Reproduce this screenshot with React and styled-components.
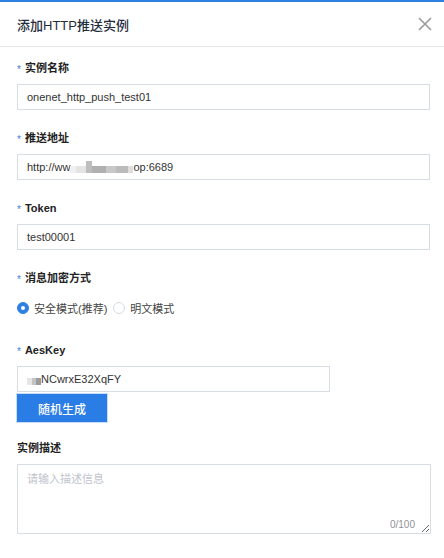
import React from 'react';
import styled, { createGlobalStyle } from 'styled-components';

const GlobalStyle = createGlobalStyle`
  html, body {
    margin: 0;
    padding: 0;
    background: #fff;
  }
  body {
    font-family: "Liberation Sans", Arial, "Noto Sans CJK SC", sans-serif;
    color: #333;
  }
`;

const App = () => {
  return (
    <>
      <GlobalStyle />
      <Dialog>
        <Header>
          <Title>添加HTTP推送实例</Title>
          <CloseButton aria-label="关闭">
            <svg width="14" height="14" viewBox="0 0 14 14">
              <path d="M1 1 L13 13 M13 1 L1 13" stroke="#9a9a9a" strokeWidth="1.6" fill="none" />
            </svg>
          </CloseButton>
        </Header>
        <Body>
          <Field>
            <Label required>实例名称</Label>
            <Input>onenet_http_push_test01</Input>
          </Field>
          <Field>
            <Label required>推送地址</Label>
            <Input>
              http://ww
              <Blur>
                <BlurBlock w={6} shade="#f0f0f0" />
                <BlurBlock w={10} shade="#e4e4e4" />
                <BlurBlock w={6} shade="#bdbdbd" tall />
                <BlurBlock w={14} shade="#b0b0b0" />
                <BlurBlock w={10} shade="#c8c8c8" />
                <BlurBlock w={12} shade="#bbbbbb" />
                <BlurBlock w={5} shade="#dedede" />
              </Blur>
              op:6689
            </Input>
          </Field>
          <Field>
            <Label required>Token</Label>
            <Input>test00001</Input>
          </Field>
          <Field>
            <Label required>消息加密方式</Label>
            <RadioRow>
              <RadioOption>
                <RadioDot checked />
                安全模式(推荐)
              </RadioOption>
              <RadioOption>
                <RadioDot />
                明文模式
              </RadioOption>
            </RadioRow>
          </Field>
          <Field tight>
            <Label required>AesKey</Label>
            <Input narrow>
              <Blur>
                <BlurBlock w={5} shade="#e6e6e6" />
                <BlurBlock w={4} shade="#c4c4c4" />
                <BlurBlock w={5} shade="#9c9c9c" />
              </Blur>
              NCwrxE32XqFY
            </Input>
            <PrimaryButton>随机生成</PrimaryButton>
          </Field>
          <Field>
            <Label>实例描述</Label>
            <TextAreaWrap>
              <TextArea placeholder="请输入描述信息" />
              <Counter>0/100</Counter>
            </TextAreaWrap>
          </Field>
        </Body>
      </Dialog>
    </>
  );
};

export default App;

const Dialog = styled.div`
  width: 444px;
  height: 558px;
  box-sizing: border-box;
  border-top: 2px solid #2f80e4;
  background: #fff;
`;

const Header = styled.div`
  height: 44px;
  display: flex;
  align-items: center;
  justify-content: space-between;
  padding: 0 12px 0 17px;
  border-bottom: 1px solid #e6e6e6;
`;

const Title = styled.div`
  font-size: 13px;
  font-weight: 500;
  color: #1f2d3d;
`;

const CloseButton = styled.button`
  border: none;
  background: none;
  padding: 0;
  width: 14px;
  height: 14px;
  display: flex;
  cursor: pointer;
`;

const Body = styled.div`
  padding: 13px 14px 0 17px;
`;

const Field = styled.div`
  display: flex;
  flex-direction: column;
  align-items: flex-start;
  margin-bottom: ${(p) => (p.tight ? '18px' : '20px')};
`;

const Label = styled.div`
  height: 16px;
  line-height: 16px;
  font-size: 11px;
  font-weight: 600;
  color: #222;
  margin-bottom: 8px;
  display: flex;
  align-items: center;

  &::before {
    content: ${(p) => (p.required ? '"*"' : 'none')};
    color: #3b82d6;
    font-size: 10px;
    font-weight: 400;
    line-height: 1;
    margin-top: 4px;
    margin-right: 4px;
  }
`;

const Input = styled.div`
  box-sizing: border-box;
  width: ${(p) => (p.narrow ? '313px' : '413px')};
  height: 26px;
  border: 1px solid #d8dde3;
  padding: 0 9px;
  display: flex;
  align-items: center;
  font-size: 11px;
  color: #333;
  white-space: nowrap;
`;

const Blur = styled.span`
  display: inline-flex;
  align-items: center;
  height: 12px;
  filter: blur(0.6px);
`;

const BlurBlock = styled.span`
  display: inline-block;
  width: ${(p) => p.w}px;
  height: ${(p) => (p.tall ? '12px' : '7px')};
  background: ${(p) => p.shade};
  margin-top: ${(p) => (p.tall ? '0' : '4px')};
`;

const RadioRow = styled.div`
  height: 28px;
  display: flex;
  align-items: center;
  gap: 6px;
`;

const RadioOption = styled.label`
  display: flex;
  align-items: center;
  gap: 5px;
  font-size: 11px;
  color: #444;
`;

const RadioDot = styled.span`
  box-sizing: border-box;
  width: 12px;
  height: 12px;
  border-radius: 50%;
  border: 1px solid ${(p) => (p.checked ? '#2f80e4' : '#d6dbe1')};
  background: ${(p) => (p.checked ? '#2f80e4' : '#fff')};
  display: flex;
  align-items: center;
  justify-content: center;

  &::after {
    content: '';
    width: 4px;
    height: 4px;
    border-radius: 50%;
    background: #fff;
    display: ${(p) => (p.checked ? 'block' : 'none')};
  }
`;

const PrimaryButton = styled.button`
  margin-top: 2px;
  width: 90px;
  height: 28px;
  border: none;
  background: #2b7de6;
  color: #fff;
  font-family: inherit;
  font-size: 12px;
  font-weight: 500;
  box-shadow: 0 0 0 1px #c6ddf8;
  cursor: pointer;
`;

const TextAreaWrap = styled.div`
  position: relative;
  width: 414px;
  height: 70px;
`;

const TextArea = styled.textarea`
  box-sizing: border-box;
  width: 100%;
  height: 100%;
  border: 1px solid #d8dde3;
  border-radius: 0;
  padding: 5px 9px;
  font-family: inherit;
  font-size: 11px;
  color: #333;
  resize: vertical;
  outline: none;

  &::placeholder {
    color: #c0c4cc;
  }
`;

const Counter = styled.span`
  position: absolute;
  right: 16px;
  bottom: 4px;
  font-size: 10px;
  color: #909399;
`;
